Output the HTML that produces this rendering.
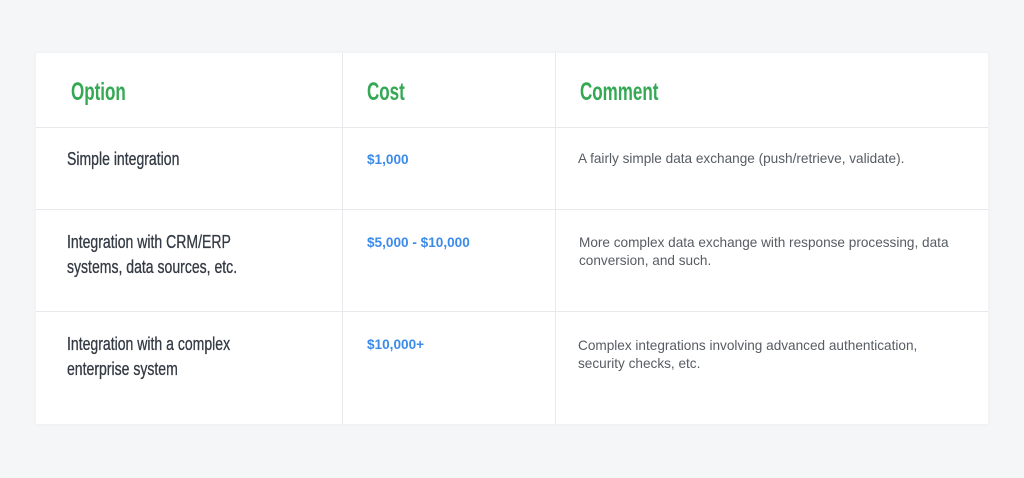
<!DOCTYPE html>
<html><head><style>
body{margin:0;width:1024px;height:478px;background:#f5f6f8;position:relative;overflow:hidden;font-family:"Liberation Sans",sans-serif}
.card{position:absolute;left:36px;top:53px;width:952px;height:371px;background:#fff;box-shadow:0 0 4px rgba(0,0,0,.05)}
.v{position:absolute;top:53px;width:1px;height:371px;background:#e8e9ec}
.h{position:absolute;left:36px;width:952px;height:1px;background:#e8e9ec}
.t{position:absolute;white-space:nowrap}
.hd{font-size:25px;font-weight:bold;color:#34a853;transform:scaleX(.68);transform-origin:left}
.op{font-size:18px;color:#333a44;line-height:25px;transform:scaleX(.78);transform-origin:left;-webkit-text-stroke:.3px #333a44}
.c{font-size:13.6px;color:#3b8beb;font-weight:bold}
.cm{font-size:13.6px;color:#575c63;line-height:18px}
</style></head><body>
<div class="card"></div>
<div class="v" style="left:342px"></div>
<div class="v" style="left:555px"></div>
<div class="h" style="top:127px"></div>
<div class="h" style="top:209px"></div>
<div class="h" style="top:311px"></div>
<div class="t hd" style="left:71px;top:78px">Option</div>
<div class="t hd" style="left:367px;top:78px">Cost</div>
<div class="t hd" style="left:580px;top:78px">Comment</div>
<div class="t op" style="left:67px;top:147px">Simple integration</div>
<div class="t op" style="left:67px;top:230px">Integration with CRM/ERP<br>systems, data sources, etc.</div>
<div class="t op" style="left:67px;top:332px">Integration with a complex<br>enterprise system</div>
<div class="t c" style="left:367px;top:152px">$1,000</div>
<div class="t c" style="left:367px;top:235px">$5,000 - $10,000</div>
<div class="t c" style="left:367px;top:337px">$10,000+</div>
<div class="t cm" style="left:578px;top:150px">A fairly simple data exchange (push/retrieve, validate).</div>
<div class="t cm" style="left:579px;top:234px">More complex data exchange with response processing, data<br>conversion, and such.</div>
<div class="t cm" style="left:578px;top:337px">Complex integrations involving advanced authentication,<br>security checks, etc.</div>
</body></html>
